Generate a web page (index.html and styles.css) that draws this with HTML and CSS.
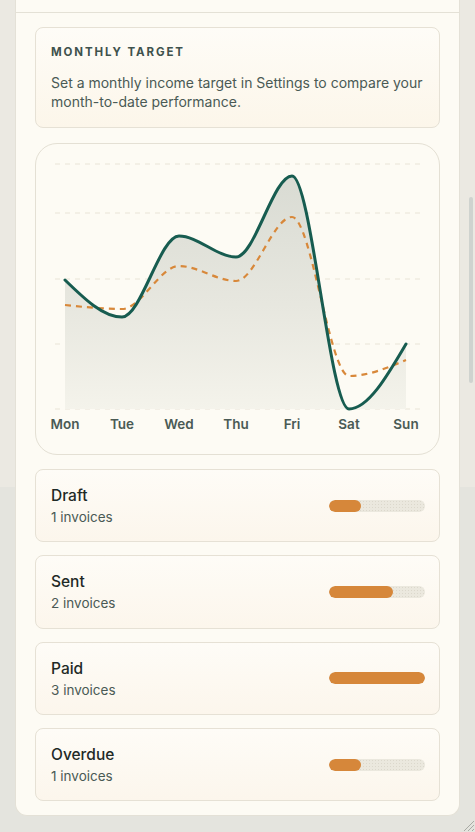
FILE: index.html
```html
<!DOCTYPE html>
<html lang="en">

<head>
    <meta charset="utf-8">
    <meta name="viewport" content="width=device-width, initial-scale=1.0">
    <title>Invoices</title>
    <link rel="stylesheet" href="styles.css">
</head>

<body>
    <div class="panel">
        <div class="panel-top"></div>

        <section class="target">
            <h2 class="target-title">MONTHLY TARGET</h2>
            <p class="target-text">Set a monthly income target in Settings to compare your month-to-date performance.</p>
        </section>

        <section class="chart">
            <svg class="chart-svg" viewBox="36 144 403 310" width="403" height="310">
                <defs>
                    <linearGradient id="fill" x1="0" y1="0" x2="0" y2="1">
                        <stop offset="0" stop-color="#d9dbd3" />
                        <stop offset="0.55" stop-color="#e7e7df" />
                        <stop offset="1" stop-color="#f4f3eb" />
                    </linearGradient>
                </defs>
                <g class="grid">
                    <line x1="55" y1="164" x2="420" y2="164" />
                    <line x1="55" y1="213" x2="420" y2="213" />
                    <line x1="55" y1="279" x2="420" y2="279" />
                    <line x1="55" y1="344" x2="420" y2="344" />
                    <line x1="55" y1="409" x2="420" y2="409" />
                </g>
                <path class="area" d="M65,280 C84,298.5 103,317 122,317 C141,317 160,236 179,236 C198,236 217,257 236,257 C254.7,257 273.3,176 292,176 C311,176 330,409 349,409 C368,409 387,376.5 406,344 L406,409 L65,409 Z" />
                <path class="target-line" d="M65,305 C84,307 103,309 122,309 C141,309 160,266 179,266 C198,266 217,281 236,281 C254.7,281 273.3,217 292,217 C311,217 330,376 349,376 C368,376 387,368 406,360" />
                <path class="income-line" d="M65,280 C84,298.5 103,317 122,317 C141,317 160,236 179,236 C198,236 217,257 236,257 C254.7,257 273.3,176 292,176 C311,176 330,409 349,409 C368,409 387,376.5 406,344" />
                <g class="days">
                    <text x="65" y="429">Mon</text>
                    <text x="122" y="429">Tue</text>
                    <text x="179" y="429">Wed</text>
                    <text x="236" y="429">Thu</text>
                    <text x="292" y="429">Fri</text>
                    <text x="349" y="429">Sat</text>
                    <text x="406" y="429">Sun</text>
                </g>
            </svg>
        </section>

        <section class="status-list">
            <article class="status">
                <div>
                    <h3 class="status-name">Draft</h3>
                    <p class="status-count">1 invoices</p>
                </div>
                <div class="bar"><div class="bar-fill" style="width: 33.3%"></div></div>
            </article>
            <article class="status">
                <div>
                    <h3 class="status-name">Sent</h3>
                    <p class="status-count">2 invoices</p>
                </div>
                <div class="bar"><div class="bar-fill" style="width: 66.7%"></div></div>
            </article>
            <article class="status">
                <div>
                    <h3 class="status-name">Paid</h3>
                    <p class="status-count">3 invoices</p>
                </div>
                <div class="bar"><div class="bar-fill" style="width: 100%"></div></div>
            </article>
            <article class="status">
                <div>
                    <h3 class="status-name">Overdue</h3>
                    <p class="status-count">1 invoices</p>
                </div>
                <div class="bar"><div class="bar-fill" style="width: 33.3%"></div></div>
            </article>
        </section>
    </div>

    <div class="scroll-thumb"></div>

    <svg class="grip" viewBox="0 0 14 14" width="14" height="14">
        <path d="M13 3 L3 13 M13 7 L7 13 M13 11 L11 13" />
    </svg>
</body>

</html>
```

FILE: styles.css
```css
html,
body {
    height: 100%;
}

body {
    margin: 0;
    background: linear-gradient(#ebe9e2 0, #ebe9e2 487px, #e4e4de 487px);
    font-family: Inter, "Noto Sans", sans-serif;
    color: #1f2a27;
    overflow: hidden;
    position: relative;
}

.panel {
    margin: 0 15px;
    width: 445px;
    background: #fdfbf4;
    border: 1px solid #e4e1d7;
    border-top: none;
    border-radius: 0 0 12px 12px;
    padding: 0 19px 14px 19px;
    box-sizing: border-box;
}

.panel-top {
    height: 12px;
    border-bottom: 1px solid #e4e1d6;
    margin: 0 -19px 14px -19px;
}

.target {
    border: 1px solid #e6e1d5;
    border-radius: 8px;
    background: linear-gradient(#fefcf7, #fcf6ea);
    padding: 17px 15px 16px 15px;
}

.target-title {
    margin: 0 0 14px 0;
    font-size: 11.5px;
    font-weight: 700;
    letter-spacing: 1.9px;
    color: #3f524d;
}

.target-text {
    margin: 0;
    font-size: 14px;
    line-height: 19px;
    color: #4a5a55;
}

.chart {
    margin-top: 15px;
    border: 1px solid #e4e0d4;
    border-radius: 22px;
    background: #fdfbf4;
    height: 310px;
}

.chart-svg {
    display: block;
}

.grid line {
    stroke: #e9e4d7;
    stroke-width: 1;
    stroke-dasharray: 5 5;
}

.area {
    fill: url(#fill);
}

.target-line {
    fill: none;
    stroke: #d8883a;
    stroke-width: 2.2;
    stroke-dasharray: 6 5;
}

.income-line {
    fill: none;
    stroke: #175c50;
    stroke-width: 3;
    stroke-linecap: round;
    stroke-linejoin: round;
}

.days text {
    font-family: Inter, "Noto Sans", sans-serif;
    font-size: 13.5px;
    font-weight: 600;
    fill: #4a5a55;
    text-anchor: middle;
}

.status-list {
    margin-top: 14px;
    display: flex;
    flex-direction: column;
    gap: 13px;
}

.status {
    height: 73.3px;
    box-sizing: border-box;
    border: 1px solid #e6e1d5;
    border-radius: 8px;
    background: linear-gradient(#fefcf7, #fcf6ec);
    display: flex;
    align-items: center;
    justify-content: space-between;
    padding: 0 14px 0 15px;
}

.status-name {
    margin: 0 0 4px 0;
    font-size: 15.5px;
    font-weight: 500;
    color: #1f2a27;
}

.status-count {
    margin: 0;
    font-size: 13.5px;
    color: #4a5a55;
}

.bar {
    width: 96px;
    height: 12px;
    border-radius: 6px;
    background-color: #ebe8de;
    background-image: radial-gradient(#dcd8cc 0.6px, transparent 0.8px);
    background-size: 3px 3px;
    overflow: hidden;
}

.bar-fill {
    height: 100%;
    border-radius: 6px;
    background: #d6873a;
}

.scroll-thumb {
    position: absolute;
    left: 469px;
    top: 197px;
    width: 4px;
    height: 186px;
    border-radius: 2px;
    background: #cfd3cf;
}

.grip {
    position: absolute;
    right: 0;
    bottom: 0;
}

.grip path {
    stroke: #a9aba5;
    stroke-width: 1;
    fill: none;
}
```
